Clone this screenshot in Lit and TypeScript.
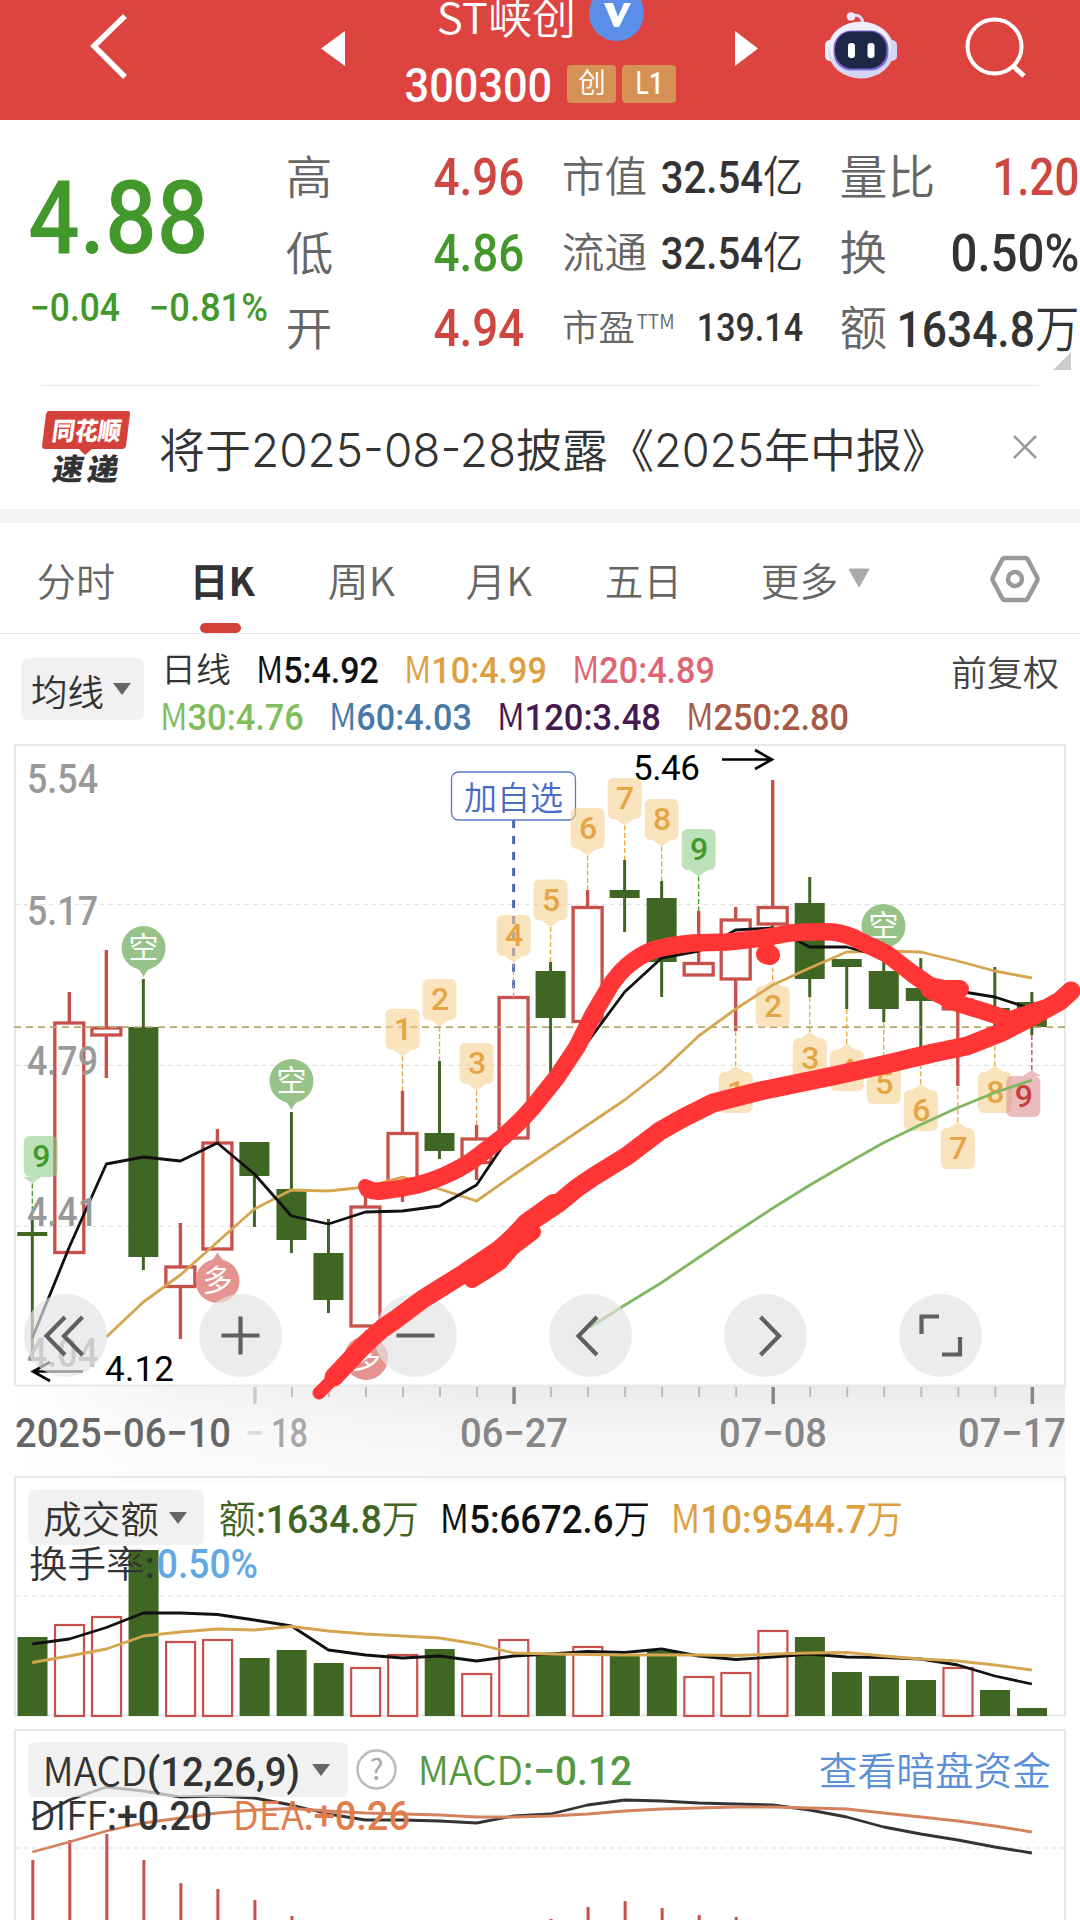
import { LitElement, html, svg, css } from "lit";
import { customElement, property } from "lit/decorators.js";

const RED = "#c8504a";
const GREEN = "#3f6623";
const STEP = 37.02;
const cx = (i: number) => 32.3 + i * STEP;

// high, body top, body bottom, low, direction (1 = up, 0 = down)
const CANDLES: number[][] = [
  [1220, 1232, 1236, 1358, 0], [992, 1023, 1252.5, 1252, 1], [950, 1028, 1035, 1078, 1],
  [979, 1027, 1257, 1270, 0], [1223, 1267, 1286.5, 1339, 1], [1129, 1143, 1249, 1249, 1],
  [1142, 1142, 1176, 1227, 0], [1112, 1189, 1240, 1253, 0], [1219, 1253, 1300, 1313, 0],
  [1189, 1207, 1326, 1326, 1], [1091, 1133.5, 1186, 1202, 1], [1061, 1133, 1151, 1159, 0],
  [1125, 1139, 1162.5, 1180, 1], [997.5, 997.5, 1138, 1138, 1], [962, 971, 1018, 1076, 0],
  [890, 907.5, 1021.5, 1022, 1], [860, 890, 898, 932, 0], [881, 898, 962, 997, 0],
  [911, 963.5, 975, 975, 1], [907, 920, 979, 1031, 1], [780, 907.5, 924, 950, 1],
  [877, 903, 979, 997, 0], [959, 959, 967, 1009, 0], [940, 971, 1009, 1022, 0],
  [958, 988, 1001, 1048, 0], [1000, 1000, 1009, 1086, 1], [967, 1008, 1015, 1028, 0],
  [992, 1002, 1027, 1035, 0],
];

const VOLUME = [
  1637, 1624, 1616, 1550, 1641, 1639, 1658, 1650, 1663, 1667, 1654, 1649, 1673, 1639,
  1655, 1646, 1656, 1651, 1676, 1672, 1630, 1637, 1672, 1676, 1680, 1667, 1690, 1708,
];
const VOL_MA5 = [
  1644, 1639, 1627.5, 1613, 1613, 1614.5, 1620, 1626, 1650, 1655, 1658, 1656, 1661, 1656,
  1654, 1651.5, 1652.5, 1649, 1656, 1659.5, 1657, 1654, 1657, 1657.5, 1659, 1665, 1676, 1684,
];
const VOL_MA10 = [
  1662.5, 1656, 1649, 1636, 1632, 1629, 1630, 1626.5, 1631, 1634, 1636, 1638, 1644, 1653,
  1654, 1654.5, 1655, 1655, 1655, 1655.5, 1654, 1653, 1652.5, 1656, 1659, 1661, 1665, 1670,
];
const DIFF = [
  1820, 1800, 1787, 1791, 1797, 1796, 1798, 1805, 1814, 1820, 1820, 1821, 1823, 1816,
  1814, 1805, 1800, 1801, 1803, 1804, 1805, 1810, 1817, 1827, 1834, 1840, 1847, 1853,
];
const DEA = [
  1852, 1842, 1831, 1823, 1818, 1813, 1810, 1808.5, 1811, 1813, 1814, 1815, 1817, 1817,
  1816, 1814, 1811, 1809, 1808, 1807, 1807, 1808, 1809, 1813, 1817, 1821, 1826, 1832,
];
const MACD_BARS = [
  1860, 1840, 1834, 1860, 1883, 1889, 1900, 1916, 0, 0, 0, 0, 0, 0, 1919, 1907, 1901, 1908, 1915, 1917,
];

const MA5 = [
  1338, 1247, 1164, 1157, 1161, 1143, 1174, 1216, 1224, 1212, 1211, 1206, 1185, 1130,
  1088, 1042, 992, 958, 951, 930, 928, 947, 947, 957, 976, 991, 997, 1009,
];
// starts at the third candle
const MA10 = [
  1337, 1302, 1275, 1242, 1209, 1190, 1191, 1187, 1177, 1189, 1201, 1175, 1150,
  1125, 1100, 1071, 1036, 1009, 985, 968, 952, 951, 952, 961, 971, 978,
];
const MA30 = "590,1327 625,1305 661,1283 698,1258 735,1233 773,1208 810,1185 846,1164 883,1143 920,1125 957,1108 994,1093 1032,1080";

// candle index, digit, box top, colour, box offset
type Mark = [number, string, number, string, number?];
const MARKS_ABOVE: Mark[] = [
  [0, "9", 1136, "green", 8.5], [10, "1", 1008.7, "gold"], [11, "2", 979, "gold"],
  [12, "3", 1043, "gold"], [13, "4", 915, "gold"], [14, "5", 879.5, "gold"],
  [15, "6", 808, "gold"], [16, "7", 778, "gold"], [17, "8", 799, "gold"], [18, "9", 829, "green"],
];
const MARKS_BELOW: Mark[] = [
  [19, "1", 1072, "gold"], [20, "2", 986, "gold"], [21, "3", 1038, "gold"],
  [22, "4", 1050, "gold"], [23, "5", 1063, "gold"], [24, "6", 1090, "gold"],
  [25, "7", 1128, "gold"], [26, "8", 1072, "gold"], [27, "9", 1076, "red", -8.5],
];
const MARK_COLORS: Record<string, string[]> = {
  gold: ["#f6cf8f", "#e6a545"],
  green: ["#8fce88", "#409a2c"],
  red: ["#dd8d8f", "#c8403c"],
};

const series = (ys: number[], from = 0) =>
  ys.map((y, i) => `${cx(i + from)},${y}`).join(" ");

const parts = (text: string) => text.split(/([0-9.:%+−,()]+)/).filter((p) => p !== "");

/* Text squeezed or stretched to a width. The box is as high as the capitals. */
@customElement("fit-text")
export class FitText extends LitElement {
  @property() text = "";
  @property({ type: Number }) width = 100;
  @property({ type: Number }) size = 40;

  static styles = css`
    :host {
      display: block;
      flex: none;
      font-family: "Noto Sans CJK SC", sans-serif;
      font-weight: var(--weight, 350);
    }
    svg {
      display: block;
      overflow: visible;
    }
    .digits {
      font-family: Roboto, "Noto Sans CJK SC", sans-serif;
      font-weight: 500;
    }
  `;

  render() {
    const h = this.size * 0.72;
    return html`<svg width=${this.width} height=${h}>
      <text x=${-this.size * 0.03} y=${h} font-size=${this.size} fill="currentColor"
        textLength=${this.width + this.size * 0.055} lengthAdjust="spacingAndGlyphs"
      >${parts(this.text).map((p) => /[0-9]|^[.:%+−,()]+$/.test(p)
        ? svg`<tspan class="digits">${p}</tspan>`
        : svg`<tspan>${p}</tspan>`)}</text>
    </svg>`;
  }
}

const fit = (text: string, width: number, size: number, cls = "") =>
  html`<fit-text class=${cls} .text=${text} .width=${width} .size=${size}></fit-text>`;

@customElement("stock-header")
export class StockHeader extends LitElement {
  static styles = css`
    :host {
      display: flex;
      height: 120px;
      background: #dd4440;
      color: #fff;
      overflow: hidden;
    }
    svg {
      display: block;
      flex: none;
      overflow: visible;
    }
    .back { margin: 13px 0 0 88px; }
    .prev { margin: 31px 0 0 191px; }
    .center { width: 270px; margin-left: 61px; }
    .next { margin: 31px 0 0 59px; }
    .robot { margin: 10px 0 0 67px; }
    .search { margin: 16px 0 0 67px; }
    .name {
      display: flex;
      align-items: flex-end;
      height: 33.5px;
      padding-left: 32px;
    }
    .name svg { margin: 0 0 -7px 14px; }
    .code {
      display: flex;
      align-items: flex-end;
      height: 68px;
    }
    .tag {
      display: flex;
      align-items: center;
      justify-content: center;
      height: 38px;
      margin: 0 0 -1px 6px;
      border-radius: 4px;
      background: #d69254;
    }
    .tag.board { width: 49px; margin-left: 16px; }
    .tag.level { width: 54px; --weight: 400; }
  `;

  render() {
    return html`
      <svg class="back" width="42" height="68" viewBox="88 13 42 68">
        <path d="M125 16L94 46l31 31" fill="none" stroke="#fff" stroke-width="5.500" />
      </svg>
      <svg class="prev" width="24" height="35"><path d="M24 0v35L0 17.5z" fill="#fff" /></svg>
      <div class="center">
        <div class="name">
          ${fit("ST峡创", 137, 43)}
          <svg width="55" height="55" viewBox="0 0 55 55">
            <circle cx="27.5" cy="27.5" r="27.5" fill="#5a8ee8" />
            <path d="M15 17h9l5 14 6-14h7L30 41h-5z" fill="#fff" />
          </svg>
        </div>
        <div class="code">
          ${fit("300300", 145, 48)}
          <div class="tag board">${fit("创", 26, 28)}</div>
          <div class="tag level">${fit("L1", 27, 31)}</div>
        </div>
      </div>
      <svg class="next" width="23" height="35"><path d="M0 0v35l23-17.5z" fill="#fff" /></svg>
      <svg class="robot" width="72" height="70" viewBox="825 10 72 70">
        <path d="M851 16q11-3 12 8" fill="none" stroke="#e4ddf6" stroke-width="3" />
        <circle cx="851" cy="16.500" r="4.300" fill="#efe8fa" />
        <rect x="825" y="40" width="12" height="21" rx="5" fill="#eef0ff" />
        <rect x="885" y="40" width="12" height="21" rx="5" fill="#d4d4f8" />
        <ellipse cx="861" cy="50" rx="33" ry="28.500" fill="#d6d6f4" />
        <ellipse cx="860" cy="46.500" rx="31" ry="24.500" fill="#f1effc" />
        <rect x="833.500" y="30.500" width="55" height="40" rx="18" fill="#7d68d8" />
        <rect x="835" y="31.500" width="51.500" height="37" rx="17" fill="#1d2748" />
        <rect x="848" y="43" width="7" height="15" rx="3" fill="#fff" />
        <rect x="867.500" y="43" width="7" height="15" rx="3" fill="#fff" />
      </svg>
      <svg class="search" width="66" height="64" viewBox="964 16 66 64">
        <circle cx="994.500" cy="46.500" r="27" fill="none" stroke="#fff" stroke-width="4" />
        <path d="M1013 66l11 10" stroke="#fff" stroke-width="5" />
      </svg>
    `;
  }
}

@customElement("quote-board")
export class QuoteBoard extends LitElement {
  static styles = css`
    :host {
      display: flex;
      position: relative;
      height: 266px;
      margin-bottom: -1px;
      padding-left: 31px;
      color: #333;
    }
    .green { color: #43982c; }
    .red { color: #cd463f; }
    .last { width: 256px; padding-top: 60px; }
    .change {
      display: flex;
      gap: 31px;
      margin-top: 41px;
    }
    .col { width: 236px; }
    .col.mid { width: 239px; margin: 0 39px 0 40px; }
    .col.end { width: 237px; }
    .row {
      display: flex;
      justify-content: space-between;
      align-items: flex-end;
      height: 75.6px;
      box-sizing: border-box;
    }
    .mid .row { padding-bottom: 3px; }
    .mid .row.pe { padding-bottom: 6px; }
    .label { color: #666; margin-bottom: 1.5px; }
    .mid .label { margin-bottom: 0; }
    .pe-label { display: flex; gap: 3px; }
    .more {
      position: absolute;
      right: 9px;
      bottom: 16px;
    }
    .rule {
      position: absolute;
      left: 41px;
      right: 41px;
      bottom: 0;
      height: 1px;
      background: #e9e9e9;
    }
  `;

  render() {
    return html`
      <div class="last green">
        ${fit("4.88", 175, 102)}
        <div class="change">${fit("−0.04", 88, 38)}${fit("−0.81%", 117, 38)}</div>
      </div>
      <div class="col">
        <div class="row">${fit("高", 44, 46, "label")}${fit("4.96", 88, 52, "red")}</div>
        <div class="row">${fit("低", 45, 46, "label")}${fit("4.86", 88, 52, "green")}</div>
        <div class="row">${fit("开", 44, 46, "label")}${fit("4.94", 88, 52, "red")}</div>
      </div>
      <div class="col mid">
        <div class="row">${fit("市值", 83, 42, "label")}${fit("32.54亿", 140, 44)}</div>
        <div class="row">${fit("流通", 83, 42, "label")}${fit("32.54亿", 140, 44)}</div>
        <div class="row pe">
          <div class="pe-label label">${fit("市盈", 71, 36)}${fit("TTM", 37, 20)}</div>
          ${fit("139.14", 104, 39)}
        </div>
      </div>
      <div class="col end">
        <div class="row">${fit("量比", 93, 47, "label")}${fit("1.20", 84, 52, "red")}</div>
        <div class="row">${fit("换", 45, 47, "label")}${fit("0.50%", 126, 51)}</div>
        <div class="row">${fit("额", 45, 47, "label")}${fit("1634.8万", 180, 50)}</div>
      </div>
      <svg class="more" width="18" height="18"><path d="M18 0v18H0z" fill="#ccc" /></svg>
      <div class="rule"></div>
    `;
  }
}

@customElement("news-strip")
export class NewsStrip extends LitElement {
  static styles = css`
    :host {
      display: flex;
      height: 124px;
      border-bottom: 14px solid #f4f4f4;
      color: #333;
    }
    .logo { margin: 26px 0 0 42px; }
    .logo text { font-family: "Noto Sans CJK SC", sans-serif; font-weight: 900; }
    .title { margin: 49px 90px 0 31px; }
    .title svg { display: block; overflow: visible; }
    .title text {
      font-family: "Noto Sans CJK SC", sans-serif;
      font-size: 46px;
      font-weight: 350;
      fill: #333;
    }
    .title .date { font-family: Inter, "Noto Sans CJK SC", sans-serif; font-size: 47px; }
    .close { margin-top: 50px; margin-left: -1px; }
  `;

  render() {
    return html`
      <svg class="logo" width="88" height="76" viewBox="42 411 88 76">
        <path d="M49 411h79q2 0 2 3l-4 32q-1 3-4 3H92l-7 6-6-6H45q-3 0-3-3l4-32q1-3 3-3z" fill="#d4403a" />
        <text transform="translate(51 440) skewX(-8)" font-size="25" textLength="69" lengthAdjust="spacingAndGlyphs" fill="#fff">同花顺</text>
        <text transform="translate(51 480) skewX(-10)" font-size="30" textLength="31" lengthAdjust="spacingAndGlyphs" fill="#333">速</text>
        <text transform="translate(86 480) skewX(-10)" font-size="30" textLength="31" lengthAdjust="spacingAndGlyphs" fill="#333">递</text>
      </svg>
      <div class="title">
        <svg width="763" height="34">
          <text x="-2" y="33">将于</text>
          <text class="date" x="90" y="33" textLength="265" lengthAdjust="spacingAndGlyphs">2025-08-28</text>
          <text x="355" y="33">披露《</text>
          <text class="date" x="493" y="33" textLength="110" lengthAdjust="spacingAndGlyphs">2025</text>
          <text x="603" y="33">年中报》</text>
        </svg>
      </div>
      <svg class="close" width="24" height="24">
        <path d="M1 1l22 22M23 1L1 23" stroke="#999" stroke-width="2.500" />
      </svg>
    `;
  }
}

@customElement("period-tabs")
export class PeriodTabs extends LitElement {
  static styles = css`
    :host {
      display: flex;
      box-sizing: border-box;
      height: 111px;
      padding: 45px 0 0 38px;
      border-bottom: 1px solid #e8e8e8;
      color: #666;
    }
    .tab { flex: none; }
    .active {
      --weight: 700;
      display: flex;
      flex-direction: column;
      justify-content: space-between;
      color: #333;
    }
    .bar {
      width: 41px;
      height: 10px;
      margin-left: 9px;
      border-radius: 5px;
      background: #d4403a;
    }
    .t1 { margin-left: 77px; }
    .t2 { margin-left: 75px; }
    .t3 { margin-left: 73px; }
    .t4 { margin-left: 75px; }
    .t5 { margin-left: 81px; display: flex; gap: 11px; }
    .gear { margin: -13px 0 0 120px; }
  `;

  render() {
    return html`
      <div class="tab">${fit("分时", 76, 39)}</div>
      <div class="tab active t1">${fit("日K", 63, 39)}<div class="bar"></div></div>
      <div class="tab t2">${fit("周K", 65, 39)}</div>
      <div class="tab t3">${fit("月K", 64, 39)}</div>
      <div class="tab t4">${fit("五日", 75, 39)}</div>
      <div class="tab t5">
        ${fit("更多", 75, 39)}
        <svg width="22" height="20"><path d="M1 1h20L11 19z" fill="#aaa" stroke="#aaa" stroke-linejoin="round" /></svg>
      </div>
      <svg class="gear" width="50" height="48" viewBox="0 0 50 48">
        <path d="M15 3h20q2 0 3 2l9 17q1 2 0 4l-9 17q-1 2-3 2H15q-2 0-3-2L3 26q-1-2 0-4l9-17q1-2 3-2z" fill="none" stroke="#999" stroke-width="4.500" />
        <circle cx="25" cy="24" r="7" fill="none" stroke="#999" stroke-width="4.500" />
      </svg>
    `;
  }
}

@customElement("ma-legend")
export class MaLegend extends LitElement {
  static styles = css`
    :host {
      display: flex;
      box-sizing: border-box;
      height: 111px;
      padding-left: 21px;
    }
    .picker {
      display: flex;
      align-items: center;
      gap: 10px;
      width: 123px;
      height: 62px;
      margin-top: 24px;
      padding-left: 11px;
      box-sizing: border-box;
      border-radius: 7px;
      background: #f1f1f1;
      color: #333;
    }
    .picker fit-text { margin-top: 7px; }
    .lines { width: 791px; padding: 22px 0 0 17px; }
    .line {
      display: flex;
      align-items: flex-end;
      gap: 27px;
      height: 26.5px;
      margin-bottom: 21px;
    }
    .dk { color: #333; margin-left: 1px; }
    .m5 { color: #111; }
    .m10 { color: #dca03f; }
    .m20 { color: #dc6673; }
    .m30 { color: #80bd5c; }
    .m60 { color: #4678a8; }
    .m120 { color: #451a50; }
    .m250 { color: #a65a45; }
    .adjust { color: #444; margin-top: 27px; }
  `;

  render() {
    return html`
      <div class="picker">
        ${fit("均线", 71, 36)}
        <svg width="18" height="12"><path d="M0 0h18L9 12z" fill="#666" /></svg>
      </div>
      <div class="lines">
        <div class="line">
          ${fit("日线", 68, 34, "dk")}${fit("M5:4.92", 121, 37, "m5")}${fit("M10:4.99", 141, 37, "m10")}${fit("M20:4.89", 141, 37, "m20")}
        </div>
        <div class="line">
          ${fit("M30:4.76", 142, 37, "m30")}${fit("M60:4.03", 141, 37, "m60")}${fit("M120:3.48", 162, 37, "m120")}${fit("M250:2.80", 161, 37, "m250")}
        </div>
      </div>
      <div class="adjust">${fit("前复权", 106, 35)}</div>
    `;
  }
}

@customElement("k-chart")
export class KChart extends LitElement {
  static styles = css`
    :host { display: block; }
    svg { display: block; overflow: visible; }
    text { font-family: Roboto, "Noto Sans CJK SC", sans-serif; }
    .axis { font-size: 40px; font-weight: 500; fill: #999; }
    .price { font-size: 35px; fill: #000; }
    .mark { font-size: 32px; font-weight: 500; text-anchor: middle; }
    .pin { font-size: 30px; fill: #fff; text-anchor: middle; font-weight: 400; }
    .fav { font-size: 33px; fill: #4a6bc8; font-weight: 350; }
    .date { font-size: 40px; font-weight: 500; }
    .line { fill: none; stroke-width: 2.8; stroke-linejoin: round; }
    .icon { fill: none; stroke: #606060; stroke-width: 4.2; }
  `;

  candle([high, top, bottom, low, up]: number[], i: number) {
    const x = cx(i);
    return up
      ? svg`<path d="M${x} ${high}V${top}M${x} ${bottom}V${low}" stroke=${RED} stroke-width="3.400" />
          <rect x=${x - 14.5} y=${top} width="29" height=${bottom - top} fill="none" stroke=${RED} stroke-width="3.300" />`
      : svg`<path d="M${x} ${high}V${low}" stroke=${GREEN} stroke-width="3" />
          <rect x=${x - 15} y=${top} width="30" height=${bottom - top} fill=${GREEN} />`;
  }

  mark([i, digit, top, color, shift = 0]: Mark, above: boolean) {
    const x = cx(i);
    const bx = x + shift;
    const [fill, ink] = MARK_COLORS[color];
    const tip = above ? top + 47.5 : top - 6;
    const edge = above ? top + 41 : top;
    const end = above ? CANDLES[i][0] : CANDLES[i][3];
    return svg`
      <path d="M${x} ${tip}V${end}" stroke=${ink} stroke-width="1.300" stroke-dasharray="5 2.500" />
      <g opacity="0.58">
        <rect x=${bx - 17} y=${top} width="34" height="41" rx="6" fill=${fill} />
        <path d="M${x - 9} ${edge}L${x} ${tip}L${x + 9} ${edge}z" fill=${fill} />
      </g>
      <text class="mark" x=${bx + 0.5} y=${top + 31} fill=${ink}>${digit}</text>`;
  }

  pin(x: number, y: number, text: string, color: string, down: boolean) {
    const d = down ? 1 : -1;
    return svg`
      <g opacity="0.92">
        <circle cx=${x} cy=${y} r="22" fill=${color} />
        <path d="M${x - 14} ${y + d * 15}Q${x - 3} ${y + d * 21} ${x} ${y + d * 29}Q${x + 3} ${y + d * 21} ${x + 14} ${y + d * 15}z" fill=${color} />
        <text class="pin" x=${x} y=${y + 10}>${text}</text>
      </g>`;
  }

  axis(text: string, y: number) {
    return svg`<text class="axis" x="27" y=${y} textLength="71" lengthAdjust="spacingAndGlyphs">${text}</text>`;
  }

  date(text: string, x: number, width: number, fill = "#868686") {
    return svg`<text class="date" x=${x - 1} y="1447" fill=${fill} textLength=${width + 2} lengthAdjust="spacingAndGlyphs">${text}</text>`;
  }

  ticks() {
    return Array.from({ length: 22 }, (_, n) => n + 6).map((i) => {
      const big = i === 13 || i === 20 || i === 27;
      const x = cx(i) + 0.5;
      if (i === 6) return svg`<path d="M${x} 1387v17" stroke="#ccc" stroke-width="3.500" />`;
      return big
        ? svg`<path d="M${x} 1387v17" stroke="#868686" stroke-width="3.500" />`
        : svg`<path d="M${x} 1387v10" stroke="#bdbdbd" stroke-width="2" />`;
    });
  }

  render() {
    return html`<svg width="1080" height="732" viewBox="0 745 1080 732">
      <defs>
        <linearGradient id="shade" x1="0" y1="0" x2="0" y2="1">
          <stop offset="0" stop-color="#ebebeb" />
          <stop offset="0.450" stop-color="#f5f5f5" />
          <stop offset="1" stop-color="#fafafa" />
        </linearGradient>
        <linearGradient id="fade" x1="0" y1="0" x2="1" y2="0">
          <stop offset="0" stop-color="#fff" />
          <stop offset="0.300" stop-color="#fff" stop-opacity="0.500" />
          <stop offset="1" stop-color="#fff" stop-opacity="0" />
        </linearGradient>
      </defs>
      <rect x="14" y="1386" width="1051" height="97" fill="url(#shade)" />
      <rect x="13" y="1386" width="480" height="97" fill="url(#fade)" />
      <rect x="15" y="745" width="1050" height="640.500" fill="none" stroke="#e8e8e8" stroke-width="2" />
      ${[904.7, 1065.3, 1226.3].map((y) => svg`<path d="M15 ${y}H1065" stroke="#e2e2e2" stroke-width="1.300" stroke-dasharray="4.500 4" />`)}
      ${CANDLES.map((c, i) => this.candle(c, i))}
      <path d="M14 1027.200H1065" stroke="#b5a870" stroke-width="1.800" stroke-dasharray="7 5" />
      <path d="M513.600 820V989" stroke="#4a66b8" stroke-width="3" stroke-dasharray="8 8" />
      <rect x="451.500" y="772" width="124" height="48" rx="7" fill="#fff" stroke="#5b78c8" stroke-width="1.300" />
      <text class="fav" x="464" y="810" textLength="99" lengthAdjust="spacingAndGlyphs">加自选</text>
      ${MARKS_ABOVE.map((m) => this.mark(m, true))}
      ${MARKS_BELOW.map((m) => this.mark(m, false))}
      <polyline class="line" points=${MA30} stroke="#7fb860" />
      <polyline class="line" points=${series(MA10, 2)} stroke="#d6a550" />
      <polyline class="line" points=${series(MA5)} stroke="#111" />
      ${this.pin(143.6, 948, "空", "#8fbe80", true)}
      ${this.pin(291.5, 1081, "空", "#8fbe80", true)}
      ${this.pin(883.5, 926, "空", "#8fbe80", true)}
      ${this.pin(217.5, 1281, "多", "#e38a87", false)}
      ${this.pin(366, 1358, "多", "#e38a87", false)}
      ${this.axis("5.54", 793)}${this.axis("5.17", 925)}${this.axis("4.79", 1075)}${this.axis("4.41", 1226)}${this.axis("4.04", 1367)}
      <text class="price" x="633" y="780" textLength="67">5.46</text>
      <path d="M722 759.500h49M755 750l17 9.500l-17 9.500" fill="none" stroke="#000" stroke-width="2.600" />
      <text class="price" x="105" y="1381" textLength="69">4.12</text>
      <path d="M34 1371.500H83M50 1362l-17 9.500l17 9.500" fill="none" stroke="#000" stroke-width="2.600" />
      ${this.ticks()}
      ${this.date("2025−06−10", 16, 214, "#666")}
      ${this.date("−", 246, 17, "#dcdcdc")}${this.date("18", 272, 35, "#a8a8a8")}
      ${this.date("06−27", 461, 106)}${this.date("07−08", 720, 106)}${this.date("07−17", 959, 106)}
      ${[65.5, 240.5, 415.5, 590.5, 765.5, 940.5].map((x) => svg`<circle cx=${x} cy="1335.500" r="41.500" fill="#e3e3e3" fill-opacity="0.680" />`)}
      <path class="icon" d="M65 1317L46.500 1336L65 1355M82.500 1317L64 1336l18.500 19" />
      <path class="icon" d="M221.500 1335.500h38M240.500 1316.500v38" />
      <path class="icon" d="M396.500 1335.500h38" />
      <path class="icon" d="M597 1317L578.500 1336L597 1355" />
      <path class="icon" d="M760.500 1317L779 1336l-18.500 19" />
      <path class="icon" d="M921.500 1334v-17.500h17.500M942 1354.500h18V1337" />
    </svg>`;
  }
}

@customElement("volume-chart")
export class VolumeChart extends LitElement {
  static styles = css`
    :host {
      display: block;
      position: relative;
      height: 252px;
    }
    .plot { display: block; overflow: visible; }
    .line { fill: none; stroke-width: 2.8; stroke-linejoin: round; }
    .legend {
      position: absolute;
      inset: 13px 0 auto 28px;
      color: #333;
    }
    .row { display: flex; align-items: flex-end; }
    .picker {
      display: flex;
      align-items: center;
      gap: 11px;
      box-sizing: border-box;
      width: 176px;
      height: 55px;
      margin-right: 16px;
      padding-left: 16px;
      border-radius: 7px;
      background: #f1f1f1;
    }
    .picker fit-text { margin-top: 4px; }
    .item { margin: 0 23px 12px 0; }
    .amount { color: #3f6623; }
    .m5 { color: #111; }
    .m10 { color: #dca03f; }
    .turnover { height: 33px; padding-left: 2px; gap: 4px; }
    .rate { color: #62a8e5; }
  `;

  bar(y: number, i: number) {
    const x = cx(i) + 0.2;
    return CANDLES[i][4]
      ? svg`<rect x=${x - 14.5} y=${y + 1} width="29" height=${1715 - y} fill="none" stroke=${RED} stroke-width="2.200" />`
      : svg`<rect x=${x - 15} y=${y} width="30" height=${1716 - y} fill=${GREEN} />`;
  }

  render() {
    return html`
      <svg class="plot" width="1080" height="252" viewBox="0 1477 1080 252">
        <path d="M15 1715.500V1477H1065V1715.500z" fill="none" stroke="#e8e8e8" stroke-width="2" />
        <path d="M15 1596H1065" stroke="#e8e8e8" stroke-width="1.600" stroke-dasharray="4.500 4" />
        ${VOLUME.map((y, i) => this.bar(y, i))}
        <polyline class="line" points=${series(VOL_MA5)} stroke="#111" />
        <polyline class="line" points=${series(VOL_MA10)} stroke="#d6a550" />
      </svg>
      <div class="legend">
        <div class="row">
          <div class="picker">
            ${fit("成交额", 114, 38)}
            <svg width="18" height="12"><path d="M0 0h18L9 12z" fill="#666" /></svg>
          </div>
          ${fit("额:1634.8万", 198, 39, "item amount")}${fit("M5:6672.6万", 208, 39, "item m5")}${fit("M10:9544.7万", 230, 39, "item m10")}
        </div>
        <div class="row turnover">${fit("换手率:", 124, 37)}${fit("0.50%", 99, 40, "rate")}</div>
      </div>
    `;
  }
}

@customElement("macd-chart")
export class MacdChart extends LitElement {
  static styles = css`
    :host {
      display: block;
      position: relative;
      height: 191px;
      overflow: hidden;
    }
    .plot { display: block; }
    .line { fill: none; stroke-width: 2.8; stroke-linejoin: round; }
    .legend {
      position: absolute;
      inset: 13px 30px auto 28px;
      color: #333;
    }
    .row { display: flex; align-items: flex-end; }
    .picker {
      display: flex;
      align-items: center;
      gap: 13px;
      box-sizing: border-box;
      width: 320px;
      height: 55px;
      margin-right: 8px;
      padding-left: 16px;
      border-radius: 7px;
      background: rgba(236, 236, 236, 0.72);
    }
    .picker fit-text { margin-top: 3px; }
    .help { margin: 0 22px 7px 0; }
    .help text { font-family: "Noto Sans CJK SC", sans-serif; }
    .macd { color: #56983f; margin-bottom: 12px; }
    .link { color: #5b8fd8; margin: 0 0 12px auto; }
    .values { height: 33px; padding-left: 3px; gap: 23px; }
    .dea { color: #de7d4e; }
  `;

  render() {
    return html`
      <svg class="plot" width="1080" height="191" viewBox="0 1729 1080 191">
        <path d="M15 1920V1730H1065V1920" fill="none" stroke="#e8e8e8" stroke-width="2" />
        <path d="M15 1848H1065" stroke="#e8e8e8" stroke-width="1.600" stroke-dasharray="4.500 4" />
        ${MACD_BARS.map((y, i) => y ? svg`<path d="M${cx(i) + 0.5} 1920V${y}" stroke=${RED} stroke-width="3" />` : "")}
        <polyline class="line" points=${series(DIFF)} stroke="#333" />
        <polyline class="line" points=${series(DEA)} stroke="#d4815d" />
      </svg>
      <div class="legend">
        <div class="row">
          <div class="picker">
            ${fit("MACD(12,26,9)", 255, 40)}
            <svg width="18" height="12"><path d="M0 0h18L9 12z" fill="#666" /></svg>
          </div>
          <svg class="help" width="41" height="41">
            <circle cx="20.500" cy="20.500" r="19" fill="none" stroke="#bbb" stroke-width="2.500" />
            <text x="20.500" y="31" font-size="29" text-anchor="middle" fill="#aaa">?</text>
          </svg>
          ${fit("MACD:−0.12", 212, 40, "macd")}
          ${fit("查看暗盘资金", 230, 38.5, "link")}
        </div>
        <div class="row values">${fit("DIFF:+0.20", 180, 40)}${fit("DEA:+0.26", 175, 40, "dea")}</div>
      </div>
    `;
  }
}

@customElement("app-root")
export class AppRoot extends LitElement {
  static styles = css`
    :host {
      display: block;
      position: relative;
      width: 1080px;
      height: 1920px;
      overflow: hidden;
      background: #fff;
    }
    .ink {
      position: absolute;
      top: 0;
      left: 0;
      fill: none;
      stroke: #ff3635;
      stroke-linecap: round;
      stroke-linejoin: round;
    }
  `;

  render() {
    return html`
      <stock-header></stock-header>
      <quote-board></quote-board>
      <news-strip></news-strip>
      <period-tabs></period-tabs>
      <ma-legend></ma-legend>
      <k-chart></k-chart>
      <volume-chart></volume-chart>
      <macd-chart></macd-chart>
      <!-- hand-drawn strokes over the chart -->
      <svg class="ink" width="1080" height="1920">
        <path stroke-width="14" d="M365 1186L372 1191" />
        <path stroke-width="17.500" d="M368 1189Q374 1192 381 1191Q400 1189 417 1185Q436 1180 450 1173Q465 1166 477 1157L503 1137Q520 1122 533 1107L557 1077L577 1047L593 1015L610 986Q618 974 627 966Q640 955 653 950Q670 945 693 943L727 942Q760 939 790 933Q815 931 833 932Q848 934 860 941L887 954L913 974L933 988L950 1001L983 1011L1010 1020L1042 1009" />
        <path stroke-width="18" d="M913 974L930 986L945 989L960 989L950 999L930 990" />
        <path stroke-width="13" d="M319 1393L334 1378" />
        <path stroke-width="19" d="M334 1377L350 1360L365 1344L383 1328L395 1320L423 1299L460 1276L500 1249L530 1222L560 1202L577 1188L593 1177L627 1156L660 1131L683 1118L713 1103L760 1091L833 1076L887 1064L933 1053L967 1046L1000 1033L1033 1016L1060 1001L1071 991" />
        <path stroke-width="16" d="M472 1280L485 1272L500 1262L512 1248L533 1232M500 1250L525 1222L553 1202" />
        <path stroke-width="20" d="M766 954L770 955" />
      </svg>
    `;
  }
}
